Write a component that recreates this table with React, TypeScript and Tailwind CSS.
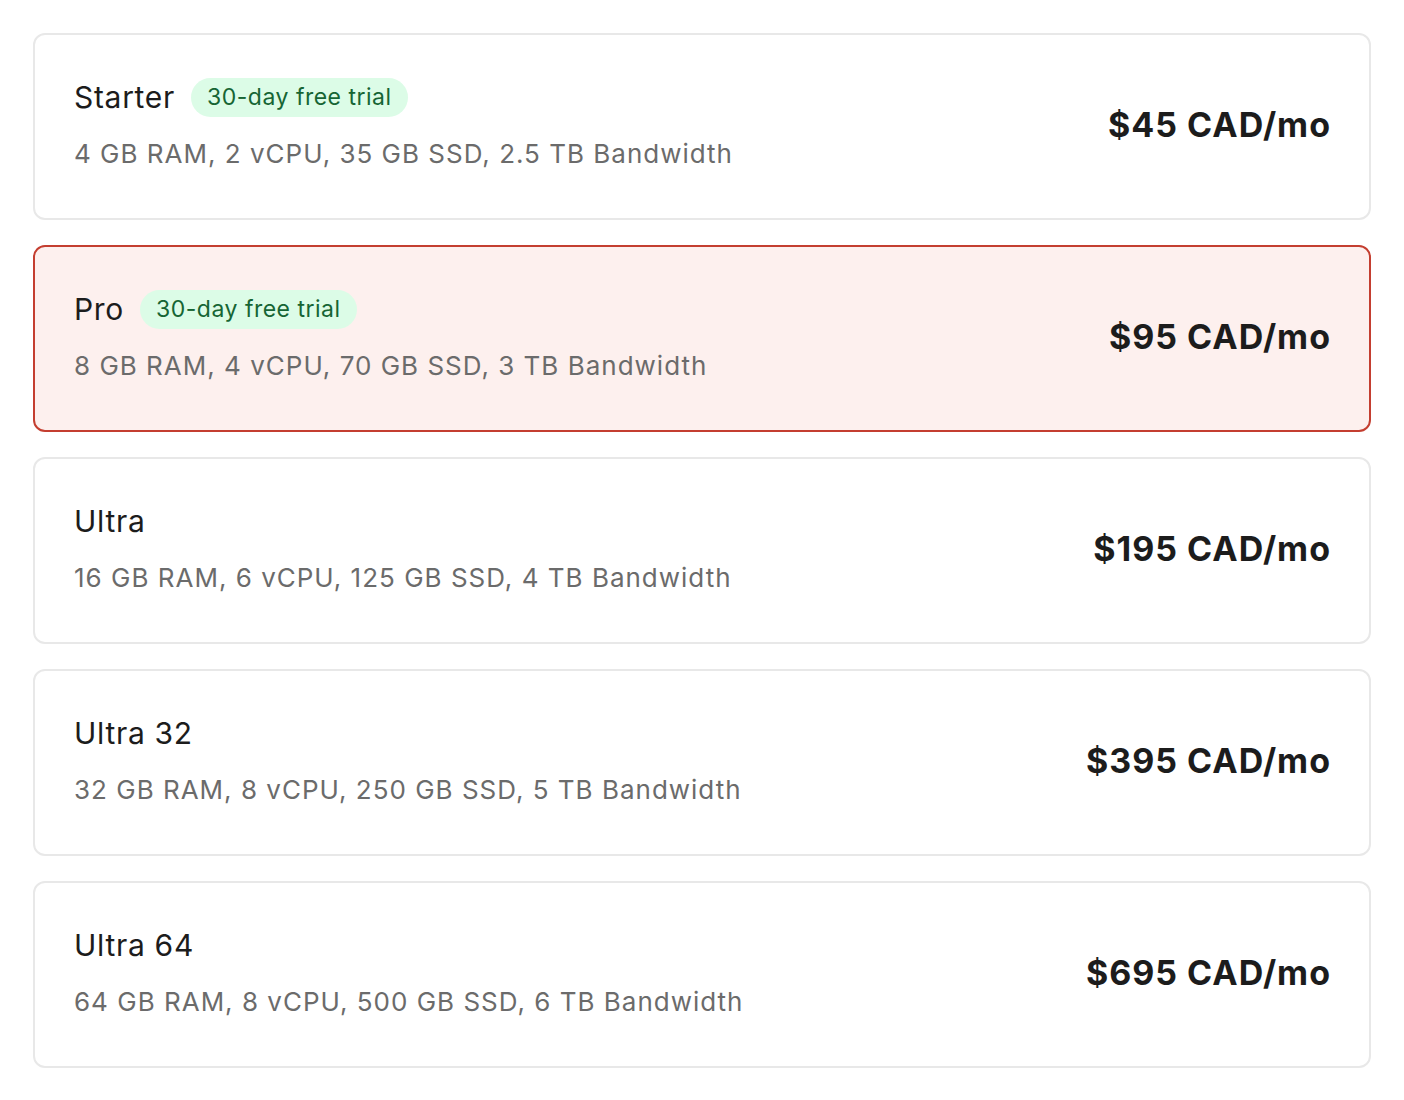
import React from "react";

type Plan = { name: string; specs: string; price: string; trial?: boolean; selected?: boolean };

const plans: Plan[] = [
  { name: "Starter", specs: "4 GB RAM, 2 vCPU, 35 GB SSD, 2.5 TB Bandwidth", price: "$45 CAD/mo", trial: true },
  { name: "Pro", specs: "8 GB RAM, 4 vCPU, 70 GB SSD, 3 TB Bandwidth", price: "$95 CAD/mo", trial: true, selected: true },
  { name: "Ultra", specs: "16 GB RAM, 6 vCPU, 125 GB SSD, 4 TB Bandwidth", price: "$195 CAD/mo" },
  { name: "Ultra 32", specs: "32 GB RAM, 8 vCPU, 250 GB SSD, 5 TB Bandwidth", price: "$395 CAD/mo" },
  { name: "Ultra 64", specs: "64 GB RAM, 8 vCPU, 500 GB SSD, 6 TB Bandwidth", price: "$695 CAD/mo" },
];

export default function App() {
  return (
    <div className="min-h-[1100px] bg-white pl-[33px] pr-[33px] pt-[33px] font-['Inter',sans-serif]">
      <div className="flex flex-col gap-[25px]">
        {plans.map((p) => (
          <div
            key={p.name}
            className={
              p.selected
                ? "flex h-[187px] items-center justify-between rounded-[12px] border-2 border-[#c43e30] bg-[#fdf0ee] pl-[39px] pr-[38px]"
                : "flex h-[187px] items-center justify-between rounded-[12px] border-2 border-[#e8e8e8] bg-white pl-[39px] pr-[38px]"
            }
          >
            <div className="mb-[9px] flex flex-col gap-[24px]">
              <div className="flex h-[39px] items-center gap-[16px]">
                <span className="text-[30px] leading-none tracking-[0.7px] text-[#1c1c1c]">{p.name}</span>
                {p.trial && (
                  <span className="flex h-[39px] items-center rounded-full bg-[#dcfce7] px-[16px] text-[23px] leading-none tracking-[0.5px] text-[#166534]">
                    30-day free trial
                  </span>
                )}
              </div>
              <div className="text-[26px] leading-none tracking-[1px] text-[#6b6b6b]">{p.specs}</div>
            </div>
            <div className="mb-[4px] text-[34px] font-bold leading-none tracking-[1px] text-[#1c1c1c]">{p.price}</div>
          </div>
        ))}
      </div>
    </div>
  );
}
